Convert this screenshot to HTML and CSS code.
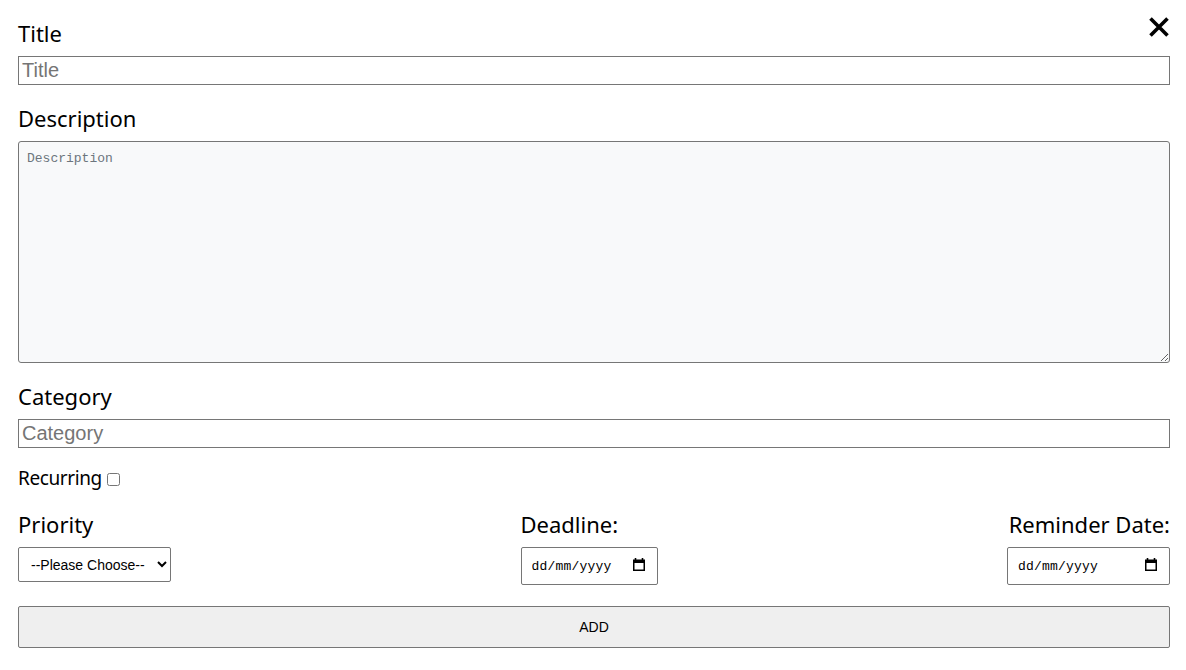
FILE: index.html
```html
<!DOCTYPE html>
<html lang="en">
<head>
<meta charset="utf-8">
<title>Add Task</title>
<link rel="stylesheet" href="styles.css">
</head>
<body>
<form class="task-form">
  <button type="button" class="close-btn" aria-label="Close">
    <svg width="22" height="20" viewBox="0 0 22 20"><path d="M2.5 1.5 L19.5 18.5 M19.5 1.5 L2.5 18.5" stroke="#000" stroke-width="3.6" stroke-linecap="butt"/></svg>
  </button>

  <div class="group">
    <label class="field-label" for="title">Title</label>
    <input class="text-input" id="title" type="text" placeholder="Title">
  </div>

  <div class="group">
    <label class="field-label" for="desc">Description</label>
    <textarea class="text-area" id="desc" placeholder="Description"></textarea>
  </div>

  <div class="group">
    <label class="field-label" for="cat">Category</label>
    <input class="text-input" id="cat" type="text" placeholder="Category">
  </div>

  <div class="recurring">
    <label for="rec" class="rec-label">Recurring</label><input id="rec" type="checkbox" class="check">
  </div>

  <div class="row">
    <div class="col">
      <label class="field-label" for="prio">Priority</label>
      <select id="prio" class="select">
        <option>--Please Choose--</option>
      </select>
    </div>
    <div class="col">
      <label class="field-label" for="deadline">Deadline:</label>
      <div class="date-field date-deadline">
        <input id="deadline" type="text" class="date" placeholder="dd/mm/yyyy">
        <svg class="cal-icon" width="12" height="13" viewBox="0 0 12 13"><path d="M2.5 0 V3 M9.5 0 V3" stroke="#000" stroke-width="1.6"/><rect x="0.75" y="2.25" width="10.5" height="10" fill="none" stroke="#000" stroke-width="1.5"/><rect x="0" y="2" width="12" height="3" fill="#000"/></svg>
      </div>
    </div>
    <div class="col col-end">
      <label class="field-label" for="remind">Reminder Date:</label>
      <div class="date-field date-remind">
        <input id="remind" type="text" class="date" placeholder="dd/mm/yyyy">
        <svg class="cal-icon" width="12" height="13" viewBox="0 0 12 13"><path d="M2.5 0 V3 M9.5 0 V3" stroke="#000" stroke-width="1.6"/><rect x="0.75" y="2.25" width="10.5" height="10" fill="none" stroke="#000" stroke-width="1.5"/><rect x="0" y="2" width="12" height="3" fill="#000"/></svg>
      </div>
    </div>
  </div>

  <button type="button" class="add-btn">ADD</button>
</form>
</body>
</html>
```

FILE: styles.css
```css
html, body {
  margin: 0;
  padding: 0;
  background: #fff;
}

.task-form {
  position: relative;
  display: flex;
  flex-direction: column;
  padding: 18px 16px 0 18px;
  font-family: "Noto Sans", "Open Sans", sans-serif;
  color: #000;
}

.close-btn {
  position: absolute;
  top: 17px;
  right: 16px;
  width: 22px;
  height: 20px;
  padding: 0;
  border: 0;
  background: transparent;
  cursor: pointer;
  display: flex;
}

.group {
  display: flex;
  flex-direction: column;
  margin-bottom: 18px;
}

.field-label {
  font-size: 22px;
  line-height: 30px;
  margin-bottom: 8px;
  height: 30px;
}

.text-input {
  box-sizing: border-box;
  height: 29px;
  margin: 0;
  padding: 1px 3px;
  border: 1px solid #767676;
  border-radius: 0;
  font-family: "Liberation Sans", Arial, sans-serif;
  font-size: 20px;
  color: #000;
  outline: none;
}

.text-input::placeholder {
  color: #757575;
}

.text-area {
  box-sizing: border-box;
  height: 222px;
  margin: 0;
  padding: 9px 8px;
  border: 1px solid #767676;
  border-radius: 3px;
  background: #f8f9fa;
  font-family: "Liberation Mono", "DejaVu Sans Mono", monospace;
  font-size: 13px;
  resize: vertical;
}

.text-area::placeholder {
  color: #6c757d;
}

.recurring {
  display: flex;
  align-items: center;
  height: 30px;
  margin-top: -3px;
  margin-bottom: 16px;
}

.rec-label {
  font-size: 19px;
  line-height: 30px;
  letter-spacing: -0.4px;
}

.check {
  width: 13px;
  height: 13px;
  margin: 3px 0 0 5px;
}

.row {
  display: flex;
  justify-content: space-between;
  align-items: flex-start;
  margin-bottom: 21px;
}

.col {
  display: flex;
  flex-direction: column;
}

.col-end {
  align-items: flex-end;
}

.select {
  box-sizing: border-box;
  width: 153px;
  height: 35px;
  padding: 0 6px 0 8px;
  border: 1px solid #767676;
  border-radius: 2px;
  background: #fff;
  font-family: "Liberation Sans", Arial, sans-serif;
  font-size: 14px;
  color: #000;
}

.date-field {
  position: relative;
  height: 38px;
}

.date-deadline {
  width: 137px;
}

.date-remind {
  width: 163px;
}

.date {
  box-sizing: border-box;
  width: 100%;
  height: 38px;
  margin: 0;
  padding: 0 8px 0 10px;
  border: 1px solid #767676;
  border-radius: 2px;
  font-family: "Liberation Mono", monospace;
  font-size: 13px;
  letter-spacing: 0.2px;
  color: #000;
  outline: none;
}

.date::placeholder {
  color: #000;
}

.cal-icon {
  position: absolute;
  top: 11px;
  right: 13px;
}

.add-btn {
  box-sizing: border-box;
  height: 42px;
  margin: 0;
  border: 1px solid #767676;
  border-radius: 2px;
  background: #efefef;
  font-family: "Liberation Sans", Arial, sans-serif;
  font-size: 14px;
  color: #000;
}
```
